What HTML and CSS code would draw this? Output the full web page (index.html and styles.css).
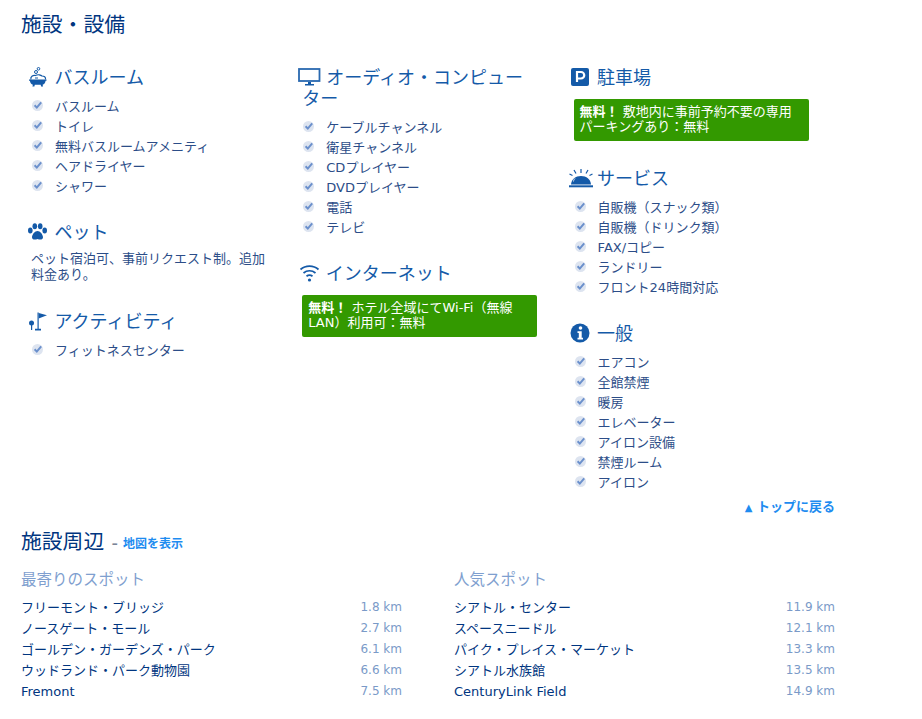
FILE: index.html
```html
<!DOCTYPE html>
<html lang="ja">
<head>
<meta charset="utf-8">
<title>施設・設備</title>
<link rel="stylesheet" href="styles.css">
</head>
<body>
<svg class="defs" width="0" height="0" aria-hidden="true">
  <symbol id="chk" viewBox="0 0 11 11">
    <circle cx="5.5" cy="5.5" r="5.5" fill="#dde4f0"/>
    <path d="M2.6 5.3 4.8 7.6 9.2 2.4" fill="none" stroke="#6b90cc" stroke-width="2"/>
  </symbol>
</svg>
<main class="page">
  <h1 class="title">施設・設備</h1>
  <div class="columns">
    <div class="col">
      <section class="group">
        <h2 class="head"><svg class="ico" viewBox="0 0 22 20"><circle cx="11.500" cy="1.800" r="1.300" fill="none" stroke="#145aa8"/><circle cx="9" cy="5" r="1.500" fill="none" stroke="#145aa8"/><path d="M4 12.500C3 9.500 6 8 8.500 8.500 11 7 14 8 15 9c2 0 4 1 3.500 3.500" fill="none" stroke="#145aa8" stroke-width="1.200"/><path d="M8 11h3" stroke="#145aa8"/><path d="M2 12.500h17.500v1.300h-.9c-.3 2.500-1.500 3.600-3 3.900l.5 1.800h-2l-.4-1.700H7.800l-.4 1.700h-2l.5-1.800c-1.500-.3-2.700-1.400-3-3.900H2z" fill="#145aa8"/></svg>バスルーム</h2>
        <ul class="list">
          <li class="item"><svg class="chk"><use href="#chk"/></svg>バスルーム</li>
          <li class="item"><svg class="chk"><use href="#chk"/></svg>トイレ</li>
          <li class="item"><svg class="chk"><use href="#chk"/></svg>無料バスルームアメニティ</li>
          <li class="item"><svg class="chk"><use href="#chk"/></svg>ヘアドライヤー</li>
          <li class="item"><svg class="chk"><use href="#chk"/></svg>シャワー</li>
        </ul>
      </section>
      <section class="group">
        <h2 class="head"><svg class="ico" viewBox="0 0 22 20" fill="#145aa8"><ellipse cx="3.300" cy="8.500" rx="2.300" ry="2.900"/><ellipse cx="7.800" cy="4.300" rx="2.300" ry="3"/><ellipse cx="13.200" cy="4.300" rx="2.300" ry="3"/><ellipse cx="17.700" cy="8.500" rx="2.300" ry="2.900"/><path d="M10.500 9c2.500 0 5.500 3.500 5.500 6.300 0 2.700-3 2.700-5.500 1.700-2.500 1-5.500 1-5.500-1.700C5 12.500 8 9 10.500 9z"/></svg>ペット</h2>
        <p class="note">ペット宿泊可、事前リクエスト制。追加料金あり。</p>
      </section>
      <section class="group">
        <h2 class="head"><svg class="ico" viewBox="0 0 22 20" fill="#145aa8"><path d="M10.500 1.500h1.200v17h-1.200z"/><path d="M11.700 2l8.300 2.200-8.300 3.300z"/><circle cx="4.500" cy="12" r="2.500"/><path d="M4 14h1.200v5H4zM8 17.800h6v1.700H8z"/></svg>アクティビティ</h2>
        <ul class="list">
          <li class="item"><svg class="chk"><use href="#chk"/></svg>フィットネスセンター</li>
        </ul>
      </section>
    </div>
    <div class="col">
      <section class="group">
        <h2 class="head"><svg class="ico ico-tv" viewBox="0 0 23 20"><rect x="1" y="2" width="20.500" height="12" fill="none" stroke="#2a69b0" stroke-width="1.800"/><path d="M10 15h3v2h3v1.500H7V17h3z" fill="#145aa8"/></svg>オーディオ・コンピューター</h2>
        <ul class="list">
          <li class="item"><svg class="chk"><use href="#chk"/></svg>ケーブルチャンネル</li>
          <li class="item"><svg class="chk"><use href="#chk"/></svg>衛星チャンネル</li>
          <li class="item"><svg class="chk"><use href="#chk"/></svg>CDプレイヤー</li>
          <li class="item"><svg class="chk"><use href="#chk"/></svg>DVDプレイヤー</li>
          <li class="item"><svg class="chk"><use href="#chk"/></svg>電話</li>
          <li class="item"><svg class="chk"><use href="#chk"/></svg>テレビ</li>
        </ul>
      </section>
      <section class="group">
        <h2 class="head"><svg class="ico" viewBox="0 0 22 20" fill="none" stroke="#145aa8" stroke-width="1.700"><path d="M2.500 6.500c5-4.500 13-4.500 18 0"/><path d="M5.500 10c3.500-3 8.500-3 12 0"/><path d="M8.500 13.300c2-1.500 4-1.500 6 0"/><circle cx="11.500" cy="17" r="1.600" fill="#145aa8" stroke="none"/></svg>インターネット</h2>
        <p class="free"><b class="free-tag">無料&#xFF01;</b> ホテル全域にてWi-Fi&#xFF08;無線LAN&#xFF09;利用可&#xFF1A;無料</p>
      </section>
    </div>
    <div class="col">
      <section class="group">
        <h2 class="head"><svg class="ico" viewBox="0 0 22 20"><rect x="1" y="1" width="18" height="18" rx="2" fill="#145aa8"/><path d="M7 15V5h4a3.200 3.200 0 0 1 0 6.500H7" fill="none" stroke="#fff" stroke-width="2.200"/></svg>駐車場</h2>
        <p class="free"><b class="free-tag">無料&#xFF01;</b> 敷地内に事前予約不要の専用パーキングあり&#xFF1A;無料</p>
      </section>
      <section class="group">
        <h2 class="head"><svg class="ico ico-bell" viewBox="0 0 24 20" fill="#145aa8"><path d="M2 16.500C2.500 11 6.500 8 12 8s9.500 3 10 8.500z"/><path d="M0 17.300h24v2H0z"/><path d="M6 10.500C5 11.500 4.500 12.500 4.500 13.500" fill="none" stroke="#fff" stroke-width=".8"/><path d="M12 1v4M5 2l2 3.500M19 2l-2 3.500M0.500 6l3 1.500M23.500 6l-3 1.500" stroke="#145aa8" stroke-width="1.200" fill="none"/></svg>サービス</h2>
        <ul class="list">
          <li class="item"><svg class="chk"><use href="#chk"/></svg>自販機&#xFF08;スナック類&#xFF09;</li>
          <li class="item"><svg class="chk"><use href="#chk"/></svg>自販機&#xFF08;ドリンク類&#xFF09;</li>
          <li class="item"><svg class="chk"><use href="#chk"/></svg>FAX/コピー</li>
          <li class="item"><svg class="chk"><use href="#chk"/></svg>ランドリー</li>
          <li class="item"><svg class="chk"><use href="#chk"/></svg>フロント24時間対応</li>
        </ul>
      </section>
      <section class="group">
        <h2 class="head"><svg class="ico" viewBox="0 0 22 20"><circle cx="10" cy="10" r="9.500" fill="#145aa8"/><circle cx="10.500" cy="5" r="1.800" fill="#fff"/><path d="M7.500 8.300h4.200v6.500h1.300v1.700H7.500v-1.700h1.300V10H7.500z" fill="#fff"/></svg>一般</h2>
        <ul class="list">
          <li class="item"><svg class="chk"><use href="#chk"/></svg>エアコン</li>
          <li class="item"><svg class="chk"><use href="#chk"/></svg>全館禁煙</li>
          <li class="item"><svg class="chk"><use href="#chk"/></svg>暖房</li>
          <li class="item"><svg class="chk"><use href="#chk"/></svg>エレベーター</li>
          <li class="item"><svg class="chk"><use href="#chk"/></svg>アイロン設備</li>
          <li class="item"><svg class="chk"><use href="#chk"/></svg>禁煙ルーム</li>
          <li class="item"><svg class="chk"><use href="#chk"/></svg>アイロン</li>
        </ul>
      </section>
    </div>
  </div>
  <p class="top-row"><a class="top-link" href="#"><span class="tri">▲</span> トップに戻る</a></p>
  <h1 class="title near-title">施設周辺 <span class="map"><span class="dash">–</span> <a class="map-link" href="#">地図を表示</a></span></h1>
  <div class="near">
    <section>
      <h3 class="sub">最寄りのスポット</h3>
      <div class="row"><span>フリーモント・ブリッジ</span><span class="km">1.8 km</span></div>
      <div class="row"><span>ノースゲート・モール</span><span class="km">2.7 km</span></div>
      <div class="row"><span>ゴールデン・ガーデンズ・パーク</span><span class="km">6.1 km</span></div>
      <div class="row"><span>ウッドランド・パーク動物園</span><span class="km">6.6 km</span></div>
      <div class="row"><span>Fremont</span><span class="km">7.5 km</span></div>
    </section>
    <section>
      <h3 class="sub">人気スポット</h3>
      <div class="row"><span>シアトル・センター</span><span class="km">11.9 km</span></div>
      <div class="row"><span>スペースニードル</span><span class="km">12.1 km</span></div>
      <div class="row"><span>パイク・プレイス・マーケット</span><span class="km">13.3 km</span></div>
      <div class="row"><span>シアトル水族館</span><span class="km">13.5 km</span></div>
      <div class="row"><span>CenturyLink Field</span><span class="km">14.9 km</span></div>
    </section>
  </div>
</main>
</body>
</html>
```

FILE: styles.css
```css
* { box-sizing: border-box; }
html, body { margin: 0; padding: 0; background: #fff; }
body {
  font-family: "DejaVu Sans", "Noto Sans CJK JP", sans-serif;
  font-size: 13px;
  color: #003580;
  overflow: hidden;
}
.defs { position: absolute; }
.page { width: 922px; height: 719px; padding: 12px 87px 0 21px; }
.title { margin: 0; font-size: 20.800px; line-height: 27px; font-weight: 400; color: #003580; }
.columns {
  display: grid;
  grid-template-columns: repeat(3, 235px);
  column-gap: 36.300px;
  margin: 28px 0 0 10px;
}
.group { margin-bottom: 27px; }
.head {
  margin: 0 0 7px;
  font-size: 18px;
  line-height: 21px;
  font-weight: 400;
  color: #145aa8;
}
.ico { display: inline-block; width: 22px; height: 20px; margin: 0 5.500px 0 -4px; vertical-align: -3px; }
.ico-tv { width: 23px; margin-right: 5px; }
.ico-bell { width: 24px; margin: 0 4.500px 0 -5px; }
.list { margin: 0; padding: 0; list-style: none; }
.item { display: flex; align-items: center; height: 20px; color: #2c4d88; padding-left: 1px; }
.chk { width: 11px; height: 11px; margin-right: 12px; flex: none; }
.note { margin: 0; padding: 1px 0; line-height: 16px; color: #2c4d88; }
.free {
  margin: 11px 0 0;
  padding: 5px 6px 6px;
  height: 42px;
  line-height: 15px;
  background: #339900;
  color: #fff;
  border-radius: 2px;
}
.free-tag { display: inline-block; }
.top-row { margin: -19px 0 0; text-align: right; line-height: 16px; font-size: 13px; }
.top-link { color: #1e8cf0; font-weight: 700; text-decoration: none; }
.tri { font-size: 10px; }
.near-title { margin-top: 13px; }
.map { font-size: 12px; font-weight: 700; vertical-align: 1px; margin-left: 1px; }
.dash { color: #7a8597; }
.map-link { color: #1e8cf0; text-decoration: none; margin-left: 1px; }
.near { display: grid; grid-template-columns: 381px 381px; column-gap: 52px; margin-top: 11px; }
.sub { margin: 0 0 6px; font-size: 15.500px; line-height: 22px; font-weight: 400; color: #7f9fcf; }
.row { display: flex; justify-content: space-between; height: 21px; line-height: 21px; color: #003580; }
.km { color: #7a9ac8; font-size: 12px; }
```
